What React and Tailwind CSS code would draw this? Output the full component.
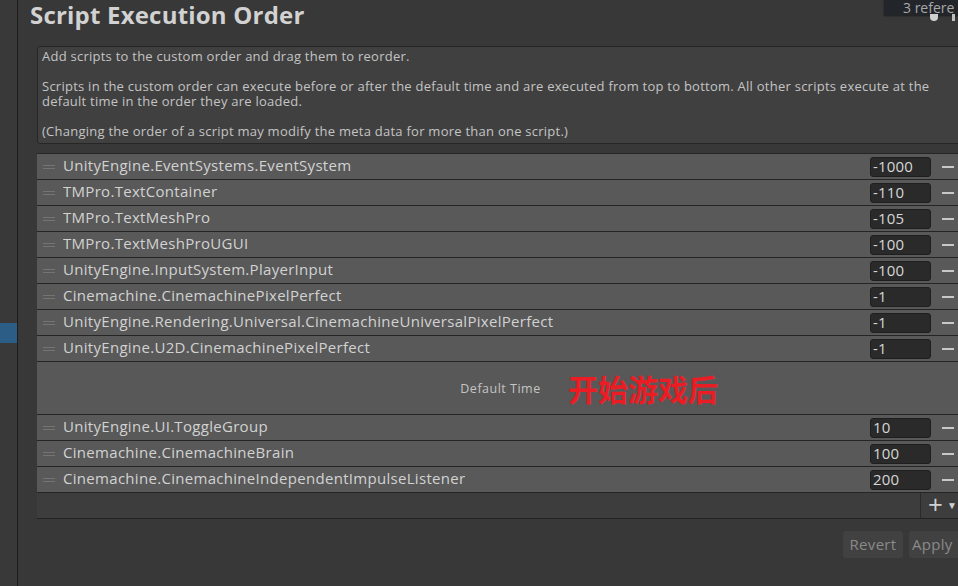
import React from 'react';

// ── Data ──────────────────────────────────────────────────────────────────────

const BEFORE = [
  { name: 'UnityEngine.EventSystems.EventSystem', order: '-1000' },
  { name: 'TMPro.TextContainer', order: '-110' },
  { name: 'TMPro.TextMeshPro', order: '-105' },
  { name: 'TMPro.TextMeshProUGUI', order: '-100' },
  { name: 'UnityEngine.InputSystem.PlayerInput', order: '-100' },
  { name: 'Cinemachine.CinemachinePixelPerfect', order: '-1' },
  { name: 'UnityEngine.Rendering.Universal.CinemachineUniversalPixelPerfect', order: '-1' },
  { name: 'UnityEngine.U2D.CinemachinePixelPerfect', order: '-1' },
];

const AFTER = [
  { name: 'UnityEngine.UI.ToggleGroup', order: '10' },
  { name: 'Cinemachine.CinemachineBrain', order: '100' },
  { name: 'Cinemachine.CinemachineIndependentImpulseListener', order: '200' },
];

// ── Row ───────────────────────────────────────────────────────────────────────

function ScriptRow({ name, order }) {
  return (
    <div className="flex items-center h-[26px] bg-[#595959] border-b border-[#252525]">
      {/* Drag handle */}
      <div className="ml-[6px] w-[12px] flex flex-col gap-[2px]">
        <div className="h-px bg-[#747474]" />
        <div className="h-px bg-[#747474]" />
      </div>
      <span className="ml-[8px] mt-[-2px] flex-1 text-[15px] tracking-[0.3px] text-[#d2d2d2] truncate">{name}</span>
      <div className="w-[61px] h-[20px] rounded-[3px] bg-[#2a2a2a] border border-[#1f1f1f] flex items-center px-[2px] text-[15px] tracking-[0.2px] text-[#d6d6d6] leading-none">
        {order}
      </div>
      <div className="w-[27px] flex items-center">
        <div className="ml-[11px] w-[12px] h-[2px] bg-[#c8c8c8]" />
      </div>
    </div>
  );
}

// ── Page ──────────────────────────────────────────────────────────────────────

export default function App() {
  return (
    <div
      className="w-[958px] h-[586px] flex overflow-hidden bg-[#383838]"
      style={{ fontFamily: '"Open Sans", "Noto Sans", sans-serif' }}
    >
      {/* Left strip */}
      <div className="w-[18px] shrink-0 bg-[#393939] border-r border-[#1d1d1d]">
        <div className="mt-[323px] h-[20px] bg-[#2c5d87]" />
      </div>

      {/* Main */}
      <div className="flex-1 relative">
        {/* Top-right overlay */}
        <div className="absolute top-0 left-[866px] w-[80px] h-[15px] bg-[#22252a] overflow-hidden shadow-[0_1px_2px_rgba(0,0,0,0.5)]">
          <span className="absolute left-[19px] top-0 text-[14px] leading-[15px] text-[#a8a8a8] whitespace-nowrap">3 refere</span>
        </div>
        <div className="absolute left-[912px] top-[14px] w-[8px] h-[7px] rounded-b-full bg-[#d0d0d0]" />
        <div className="absolute left-[934px] top-[14px] w-[3px] h-[7px] bg-[#c0c0c0]" />

        <h1 className="ml-[12px] h-[46px] pt-[1px] text-[24px] font-bold text-[#d2d2d2] leading-[28px] tracking-[0.2px]">
          Script Execution Order
        </h1>

        <div className="pl-[19px]">
          {/* Help box */}
          <div className="mr-[-6px] h-[98px] bg-[#404040] border border-[#262626] rounded-[3px] pl-[4px] pr-[30px] pt-[2px] text-[13px] leading-[15px] text-[#c4c4c4] tracking-[0.25px]">
            <p>Add scripts to the custom order and drag them to reorder.</p>
            <p className="mt-[15px]">
              Scripts in the custom order can execute before or after the default time and are executed from top to bottom. All other scripts execute at the default time in the order they are loaded.
            </p>
            <p className="mt-[15px]">(Changing the order of a script may modify the meta data for more than one script.)</p>
          </div>

          {/* List */}
          <div className="mt-[9px] border-t border-[#252525]">
            {BEFORE.map((s) => (
              <ScriptRow key={s.name} {...s} />
            ))}

            {/* Default Time */}
            <div className="relative h-[53px] bg-[#585858] border-b border-[#252525] flex items-center justify-center">
              <span className="ml-[6px] mt-[2px] text-[12.5px] text-[#c4c4c4] tracking-[0.5px]">Default Time</span>
              <span
                className="absolute left-[531px] top-[10px] text-[30px] font-bold text-[#ec1c24] leading-[32px]"
                style={{ fontFamily: '"Noto Sans CJK SC", sans-serif' }}
              >
                开始游戏后
              </span>
            </div>

            {AFTER.map((s) => (
              <ScriptRow key={s.name} {...s} />
            ))}

            {/* Footer */}
            <div className="h-[26px] bg-[#3d3d3d] border-b border-[#232323] flex justify-end">
              <div className="w-[38px] border-l border-[#2a2a2a] flex items-center pl-[7px] gap-[4px] text-[#d0d0d0]">
                <span className="text-[26px] leading-none mt-[-3px]">+</span>
                <span className="text-[10px]">▼</span>
              </div>
            </div>
          </div>

          {/* Buttons */}
          <div className="mt-[12px] flex justify-end gap-[6px] mr-[-8px]">
            <div className="w-[60px] h-[27px] rounded-[3px] bg-[#414141] flex items-center justify-center text-[15px] text-[#8a8a8a] tracking-[0.3px]">
              Revert
            </div>
            <div className="w-[57px] h-[27px] rounded-[3px] bg-[#414141] flex items-center pl-[3px] text-[15px] text-[#8a8a8a] tracking-[0.3px]">
              Apply
            </div>
          </div>
        </div>
      </div>
    </div>
  );
}
